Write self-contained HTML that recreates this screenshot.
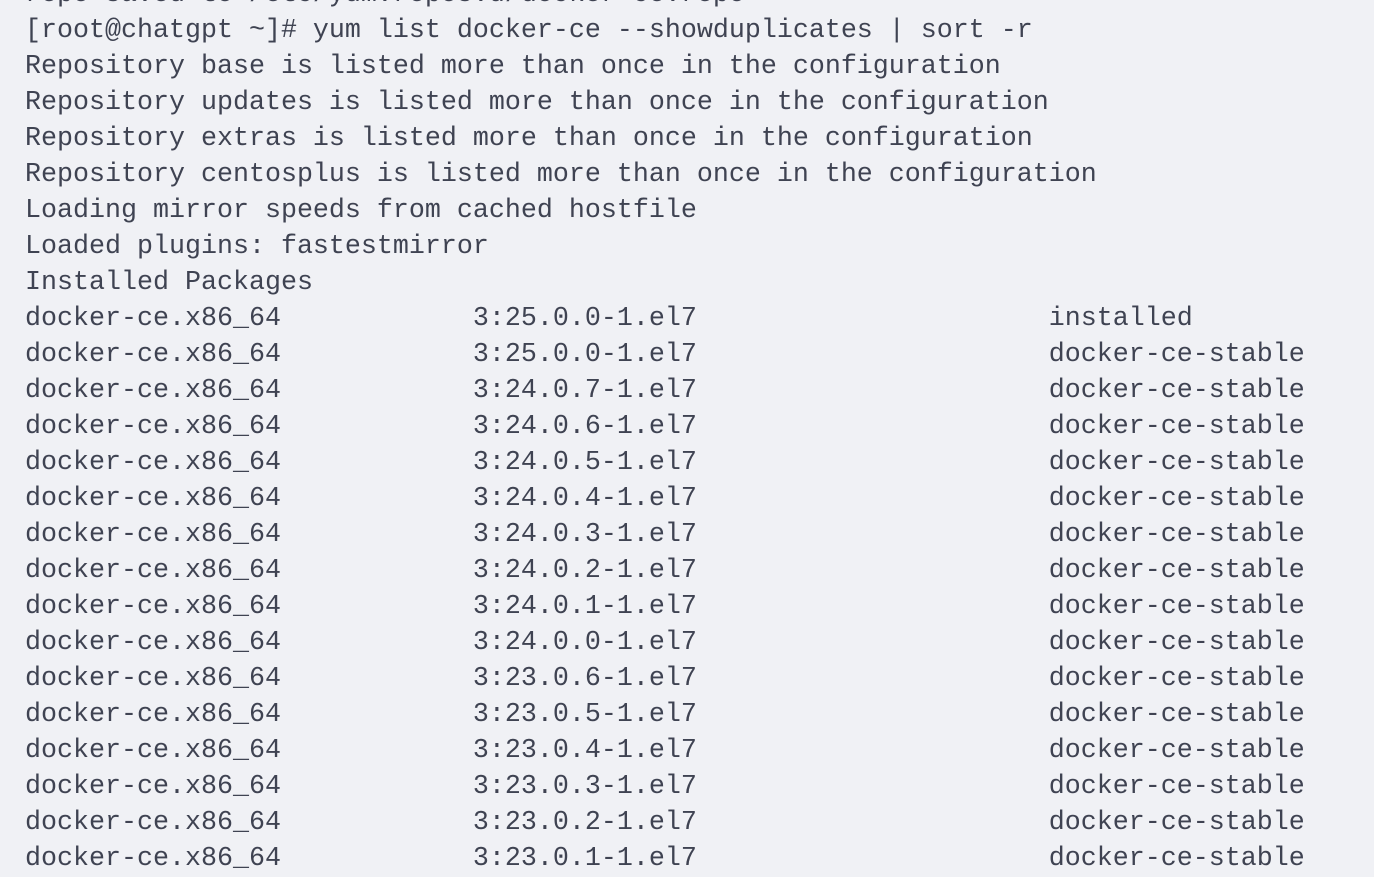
<!DOCTYPE html>
<html><head><style>
html,body{margin:0;padding:0;background:#f0f1f5;width:1374px;height:866px;overflow:hidden}
pre{position:absolute;left:25px;top:-23px;margin:0;font-family:"Liberation Mono",monospace;font-size:26.67px;line-height:36px;color:#3f4352}
</style></head><body><pre>repo saved to /etc/yum.repos.d/docker-ce.repo
[root@chatgpt ~]# yum list docker-ce --showduplicates | sort -r
Repository base is listed more than once in the configuration
Repository updates is listed more than once in the configuration
Repository extras is listed more than once in the configuration
Repository centosplus is listed more than once in the configuration
Loading mirror speeds from cached hostfile
Loaded plugins: fastestmirror
Installed Packages
docker-ce.x86_64            3:25.0.0-1.el7                      installed
docker-ce.x86_64            3:25.0.0-1.el7                      docker-ce-stable
docker-ce.x86_64            3:24.0.7-1.el7                      docker-ce-stable
docker-ce.x86_64            3:24.0.6-1.el7                      docker-ce-stable
docker-ce.x86_64            3:24.0.5-1.el7                      docker-ce-stable
docker-ce.x86_64            3:24.0.4-1.el7                      docker-ce-stable
docker-ce.x86_64            3:24.0.3-1.el7                      docker-ce-stable
docker-ce.x86_64            3:24.0.2-1.el7                      docker-ce-stable
docker-ce.x86_64            3:24.0.1-1.el7                      docker-ce-stable
docker-ce.x86_64            3:24.0.0-1.el7                      docker-ce-stable
docker-ce.x86_64            3:23.0.6-1.el7                      docker-ce-stable
docker-ce.x86_64            3:23.0.5-1.el7                      docker-ce-stable
docker-ce.x86_64            3:23.0.4-1.el7                      docker-ce-stable
docker-ce.x86_64            3:23.0.3-1.el7                      docker-ce-stable
docker-ce.x86_64            3:23.0.2-1.el7                      docker-ce-stable
docker-ce.x86_64            3:23.0.1-1.el7                      docker-ce-stable</pre></body></html>
